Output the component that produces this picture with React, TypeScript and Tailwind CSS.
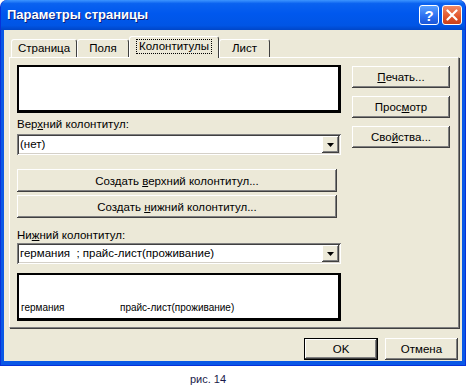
import type { ReactNode } from "react";

const raised =
  "bg-[#ece9d8] shadow-[inset_-1px_-1px_#404040,inset_1px_1px_#ffffff,inset_-2px_-2px_#808080]";

function Btn({ children, className }: { children: ReactNode; className: string }) {
  return (
    <div className={`flex items-center justify-center leading-[14px] ${raised} ${className}`}>
      {children}
    </div>
  );
}

function Combo({ value }: { value: string }) {
  return (
    <div className="flex h-[21px] bg-white p-[2px] shadow-[inset_1px_1px_#808080,inset_-1px_-1px_#ffffff,inset_2px_2px_#404040,inset_-2px_-2px_#d4d0c8]">
      <div className="flex-1 whitespace-pre pl-[1px] leading-[17px]">{value}</div>
      <div className={`flex w-[17px] items-center justify-center ${raised}`}>
        <svg width="7" height="4" viewBox="0 0 7 4">
          <path d="M0 0h7L3.5 4z" fill="#000" />
        </svg>
      </div>
    </div>
  );
}

function Tab({ label, width }: { label: string; width: string }) {
  return (
    <div
      className={`flex h-[18px] items-center justify-center rounded-t-[3px] border-l border-t border-r border-l-white border-t-white border-r-[#404040] bg-[#ece9d8] ${width}`}
    >
      {label}
    </div>
  );
}

export default function App() {
  return (
    <div className="h-[392px] w-[466px] bg-white font-['Liberation_Sans',Arial,sans-serif] text-[11.5px] text-black">
      <div className="flex h-[366px] w-[466px] flex-col rounded-t-[7px] border-x border-b border-[#0831d9] bg-[#0a58e6]">
        {/* title bar */}
        <div className="flex h-[30px] items-center rounded-t-[7px] bg-[linear-gradient(to_bottom,#3d95ff_0%,#0a62f0_12%,#0058ee_45%,#0055e5_85%,#0046c8_100%)] pl-[6px] pr-[3px]">
          <div className="flex-1 text-[13px] font-bold text-white [text-shadow:1px_1px_#0a1e7a]">
            Параметры страницы
          </div>
          <div className="flex h-[20px] w-[20px] items-center justify-center rounded-[3px] border border-white bg-[linear-gradient(to_bottom,#5aa0ff,#2a6ef0_60%,#1a55d8)] text-[15px] font-bold leading-none text-white">
            ?
          </div>
          <div className="ml-[3px] flex h-[20px] w-[20px] items-center justify-center rounded-[3px] border border-white bg-[linear-gradient(to_bottom,#f08a66,#e2552b_60%,#c8401a)]">
            <svg width="12" height="12" viewBox="0 0 12 12">
              <path d="M1.5 1.5l9 9M10.5 1.5l-9 9" stroke="#fff" strokeWidth="2.2" strokeLinecap="round" />
            </svg>
          </div>
        </div>

        {/* body */}
        <div className="mx-[3px] mb-[4px] flex flex-1 flex-col bg-[#ece9d8] pt-[7px]">
          <div className="ml-[7px] flex h-[20px] items-end">
            <Tab label="Страница" width="w-[66px]" />
            <Tab label="Поля" width="w-[52px]" />
            <div className="relative z-10 -mb-px flex h-[22px] w-[90px] items-start justify-center rounded-t-[3px] border-l border-t border-r border-l-white border-t-white border-r-[#404040] bg-[#ece9d8] pt-[2px]">
              <span className="border border-dotted border-black px-[2px] leading-[13px]">Колонтитулы</span>
            </div>
            <Tab label="Лист" width="w-[51px]" />
          </div>

          {/* panel */}
          <div className="ml-[5px] mr-[3px] flex h-[271px] gap-[11px] border-l border-t border-r border-b border-l-white border-t-white border-r-[#808080] border-b-[#808080] pl-[7px] pt-[7px] shadow-[1px_1px_0_#404040]">
            <div className="flex w-[324px] flex-col">
              <div className="h-[48px] border-l-2 border-t-2 border-r-[3px] border-b-[3px] border-black bg-white" />
              <div className="mt-[4px] h-[14px] leading-[14px]">
                Вер<u>х</u>ний колонтитул:
              </div>
              <div className="mt-[3px]">
                <Combo value="(нет)" />
              </div>
              <Btn className="mt-[14px] h-[23px] w-[320px]">
                <span>
                  Создать <u>в</u>ерхний колонтитул...
                </span>
              </Btn>
              <Btn className="mt-[3px] h-[23px] w-[320px]">
                <span>
                  Создать <u>н</u>ижний колонтитул...
                </span>
              </Btn>
              <div className="mt-[10px] h-[14px] leading-[14px]">
                Ни<u>ж</u>ний колонтитул:
              </div>
              <div className="mt-[1px]">
                <Combo value="германия  ; прайс-лист(проживание)" />
              </div>
              <div className="mt-[9px] flex h-[48px] items-end border-l-2 border-t-2 border-r-[3px] border-b-[3px] border-black bg-white pb-[4px] pl-[2px] text-[10px] leading-[12px]">
                <span className="w-[99px]">германия</span>
                <span>прайс-лист(проживание)</span>
              </div>
            </div>

            <div className="mt-[1px] flex w-[98px] flex-col gap-[8px]">
              <Btn className="h-[22px]">
                <span>
                  <u>П</u>ечать...
                </span>
              </Btn>
              <Btn className="h-[22px]">
                <span>
                  Прос<u>м</u>отр
                </span>
              </Btn>
              <Btn className="h-[22px]">
                <span>
                  Сво<u>й</u>ства...
                </span>
              </Btn>
            </div>
          </div>

          {/* dialog buttons */}
          <div className="mt-[10px] flex justify-end gap-[7px] pr-[4px]">
            <div className="h-[22px] w-[74px] border border-black">
              <Btn className="h-full w-full">OK</Btn>
            </div>
            <Btn className="h-[22px] w-[73px]">Отмена</Btn>
          </div>
        </div>
      </div>
      <div className="mt-[6px] pl-[190px] text-[11px] leading-[14px] text-[#1a1a4a]">рис. 14</div>
    </div>
  );
}
